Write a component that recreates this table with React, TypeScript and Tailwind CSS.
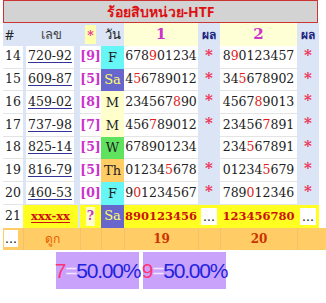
import React from 'react';

type Row = {
  n: number;
  code: string;
  k: string;
  day: string;
  a: string;
  ai: number;
  as: boolean;
  b: string;
  bi: number;
  bs: boolean;
};

const rows: Row[] = [
  { n: 14, code: '720-92', k: '9', day: 'F', a: '678901234', ai: 3, as: true, b: '890123457', bi: 1, bs: true },
  { n: 15, code: '609-87', k: '5', day: 'Sa', a: '456789012', ai: 1, as: true, b: '345678902', bi: 2, bs: true },
  { n: 16, code: '459-02', k: '8', day: 'M', a: '234567890', ai: 6, as: true, b: '456789013', bi: 4, bs: true },
  { n: 17, code: '737-98', k: '7', day: 'M', a: '456789012', ai: 3, as: true, b: '234567891', bi: 5, bs: true },
  { n: 18, code: '825-14', k: '5', day: 'W', a: '678901234', ai: -1, as: false, b: '234567891', bi: 3, bs: true },
  { n: 19, code: '816-79', k: '5', day: 'Th', a: '012345678', ai: 5, as: true, b: '012345679', bi: 5, bs: true },
  { n: 20, code: '460-53', k: '0', day: 'F', a: '901234567', ai: 1, as: true, b: '789012346', bi: 3, bs: true },
];

const dayStyle: Record<string, string> = {
  F: 'bg-[#66f6f6] text-[#222]',
  Sa: 'bg-[#6666cc] text-[#ffff66]',
  M: 'bg-[#ffffcc] text-[#222]',
  W: 'bg-[#5fe35f] text-[#222]',
  Th: 'bg-[#ffcc66] text-[#222]',
};

const grid = 'grid grid-cols-[20px_57px_21px_23px_74px_22px_77px_22px]';
const serif = { fontFamily: '"DejaVu Serif", "Liberation Serif", serif' };
const thai = { fontFamily: 'Tahoma, "Noto Sans", "DejaVu Sans", sans-serif' };

const Digits = ({ s, i }: { s: string; i: number }) => (
  <>
    {s.split('').map((c, j) => (
      <span key={j} className={j === i ? 'text-[#e02020]' : ''}>
        {c}
      </span>
    ))}
  </>
);

const Star = () => <span className="text-[#ee3355] font-bold text-[15px] leading-none -mt-[4px]">*</span>;

export default function App() {
  return (
    <div className="w-[326px] h-[303px] bg-white pl-[3px] text-[12.5px] text-[#222]" style={serif}>
      <div
        className="w-[315px] h-[23px] bg-[#d3d3d3] border border-[#cc3333] flex items-center justify-center text-[#dd1111] font-bold text-[14px]"
        style={thai}
      >
        ร้อยสิบหน่วย-HTF
      </div>

      <div className={`${grid} h-[23px]`}>
        <div className="bg-[#dbe5f5] flex items-center pl-[2px] text-[14px]" style={thai}>#</div>
        <div className="bg-[#dbe5f5] flex items-center justify-center text-[#444] text-[13px]" style={thai}>เลข</div>
        <div className="bg-[#dbe5f5] flex items-center justify-center">
          <span className="bg-[#ffffb0] text-[#ee3399] h-[19px] px-[2px] flex items-start pt-[2px] font-bold">*</span>
        </div>
        <div className="bg-[#dbe5f5] flex items-center justify-center text-[13px]" style={thai}>วัน</div>
        <div className="bg-[#ffffd5] flex items-center justify-center text-[#cc33cc] font-bold text-[15px]">1</div>
        <div className="bg-[#dbe5f5] flex items-center justify-center text-[#1a237e] font-bold text-[12px]" style={thai}>ผล</div>
        <div className="bg-[#ffffd5] flex items-center justify-center text-[#cc33cc] font-bold text-[15px]">2</div>
        <div className="bg-[#dbe5f5] flex items-center justify-center text-[#1a237e] font-bold text-[12px]" style={thai}>ผล</div>
      </div>

      {rows.map((r) => (
        <div key={r.n} className={`${grid} h-[22.7px]`}>
          <div className="bg-white border-b border-[#e4e4e4] flex items-center pl-[2px]">{r.n}</div>
          <div className="bg-[#dbe5f5] flex px-[3px] pr-[6px]">
            <div className="bg-white border-b border-[#e4e4e4] flex-1 flex items-center justify-center">
              <span className="underline decoration-[#333399] underline-offset-[2px]">{r.code}</span>
            </div>
          </div>
          <div className="bg-white border-b border-[#e4e4e4] flex items-center justify-center text-[#cc33cc] font-bold">
            [{r.k}]
          </div>
          <div className={`${dayStyle[r.day]} flex items-center justify-center text-[13px]`}>{r.day}</div>
          <div className="bg-white border-b border-[#e4e4e4] flex items-center justify-center">
            <Digits s={r.a} i={r.ai} />
          </div>
          <div className="bg-[#dbe5f5] flex items-center justify-center">{r.as && <Star />}</div>
          <div className="bg-white border-b border-[#e4e4e4] flex items-center justify-center">
            <Digits s={r.b} i={r.bi} />
          </div>
          <div className="bg-[#dbe5f5] flex items-center justify-center">{r.bs && <Star />}</div>
        </div>
      ))}

      <div className={`${grid} h-[22.7px]`}>
        <div className="bg-white flex items-center pl-[2px]">21</div>
        <div className="bg-[#dbe5f5] flex pr-[2px]">
          <div className="bg-[#ffff22] flex-1 flex items-center justify-center text-[#cc1111] font-bold text-[11.5px]">
            <span className="underline underline-offset-[2px]">xxx-xx</span>
          </div>
        </div>
        <div className="bg-[#ffff22] flex items-center justify-center">
          <span className="bg-[#ffffcc] text-[#cc33cc] font-bold px-[1px]">?</span>
        </div>
        <div className="bg-[#6666cc] text-[#ffff66] flex items-center justify-center text-[13px]">Sa</div>
        <div className="bg-[#ffff22] flex items-center justify-center text-[#cc1111] font-bold text-[11.5px]">890123456</div>
        <div className="bg-[#ffff22] flex items-center justify-center">
          <span className="bg-white px-[2px] leading-[17px]">...</span>
        </div>
        <div className="bg-[#ffff22] flex items-center justify-center text-[#cc1111] font-bold text-[11.5px]">123456780</div>
        <div className="bg-[#ffff22] flex items-center justify-center">
          <span className="bg-white px-[2px] leading-[17px]">...</span>
        </div>
      </div>

      <div className={`${grid} h-[22.7px] bg-[#ffcc66]`}>
        <div className="flex items-center pl-[1px]">
          <span className="bg-white px-[1px] leading-[17px]">...</span>
        </div>
        <div className="flex items-center justify-center text-[#e65c00] text-[12px] border-l border-[#f3c070]" style={thai}>ดูก</div>
        <div className="border-l border-[#f3c070]" />
        <div className="border-l border-[#f3c070]" />
        <div className="flex items-center justify-center text-[#cc3300] font-bold text-[12px] border-l border-[#f3c070]">19</div>
        <div className="border-l border-[#f3c070]" />
        <div className="flex items-center justify-center text-[#cc3300] font-bold text-[12px] border-l border-[#f3c070]">20</div>
        <div className="border-l border-[#f3c070]" />
      </div>

      <div className="flex gap-[4px] ml-[53px] mt-[2px]" style={{ fontFamily: '"Liberation Sans", Arial, sans-serif' }}>
        {['7', '9'].map((d) => (
          <div key={d} className="w-[83px] h-[37px] bg-[#c9a3fb] flex items-center justify-center text-[21px] tracking-[-1.2px]">
            <span className="text-[#ff3377]">{d}</span>
            <span className="text-[#f0e4ff]">=</span>
            <span className="text-[#2222dd]">50.00%</span>
          </div>
        ))}
      </div>
    </div>
  );
}
